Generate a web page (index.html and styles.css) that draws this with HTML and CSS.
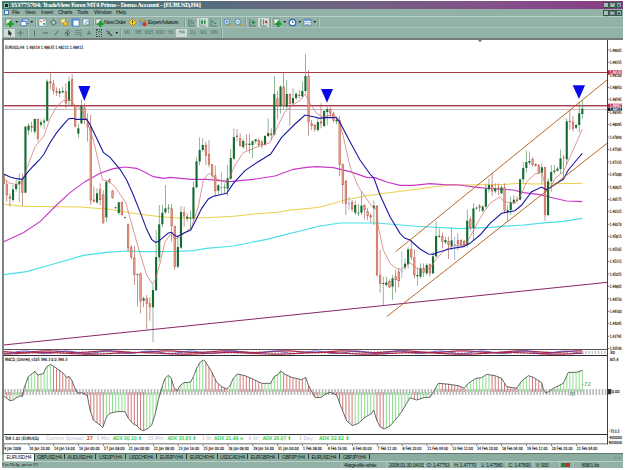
FILE: index.html
```
<!DOCTYPE html>
<html lang="en">
<head>
    <meta charset="UTF-8">
    <meta name="viewport" content="width=device-width, initial-scale=1.0">
    <title>TradeView Forex MT4 Prime</title>
    <link rel="stylesheet" href="styles.css">
</head>
<body>
    <svg class="defs">
        <symbol id="plus" viewBox="0 0 10 10"><path d="M1 1h6v6H1z" fill="#e8f0e8" stroke="#587868" stroke-width=".7"/><path d="M6 3v7M2.500 6.500h7" stroke="#10a020" stroke-width="2.600"/></symbol>
        <symbol id="profiles" viewBox="0 0 10 10"><path d="M3 1h6v5H3z" fill="#cfe4ff" stroke="#3868a0" stroke-width=".8"/><path d="M1 3.5h6v5H1z" fill="#fff" stroke="#3868a0" stroke-width=".8"/><path d="M1 4h6" stroke="#4888d8"/></symbol>
        <symbol id="watch" viewBox="0 0 10 10"><path d="M1 1h8v8H1z" fill="#fff" stroke="#4878a8" stroke-width=".7"/><path d="M2.5 3h2v2h-2z" fill="#d89010"/><path d="M5.5 5.5h2v2h-2z" fill="#20903c"/><path d="M5.5 3.5l2-1" stroke="#c33"/></symbol>
        <symbol id="navi" viewBox="0 0 10 10"><circle cx="5" cy="5" r="2.6" fill="none" stroke="#587068" stroke-width=".8"/><path d="M5 0v10M0 5h10" stroke="#587068" stroke-width=".6"/><circle cx="5" cy="5" r="1.2" fill="#dce8e0"/></symbol>
        <symbol id="folder" viewBox="0 0 10 10"><path d="M1 1h5v5H1z" fill="#f6e9a0" stroke="#a98b28" stroke-width=".7"/><path d="M6 3l1 2 2.3.2-1.7 1.6.5 2.2L6 8 4 9l.4-2.2L3 5.2 5 5z" fill="#f8cc28" stroke="#a07818" stroke-width=".5"/></symbol>
        <symbol id="terminal" viewBox="0 0 10 10"><path d="M1 1h8v8H1z" fill="#fff" stroke="#3068b0" stroke-width=".8"/><path d="M1 2h8M2 2v7" stroke="#3c80d0" stroke-width="1.5"/></symbol>
        <symbol id="tester" viewBox="0 0 10 10"><path d="M1 1h7v7H1z" fill="#eef4fc" stroke="#5880a0" stroke-width=".8"/><circle cx="6" cy="5.5" r="2" fill="#d8eef8" stroke="#607080" stroke-width=".7"/><path d="M7.3 7L9 9" stroke="#b88820"/></symbol>
        <symbol id="diamond" viewBox="0 0 10 10"><path d="M5 .5L9.5 5 5 9.5.5 5z" fill="#f8d030" stroke="#987010" stroke-width=".7"/><path d="M5 2.6v3M5 6.4v1.2" stroke="#4c3800"/></symbol>
        <symbol id="expert" viewBox="0 0 10 10"><path d="M1 4l4-3 4 3z" fill="#f0b838" stroke="#906010" stroke-width=".6"/><circle cx="4" cy="6" r="2.4" fill="#70a0d8"/><circle cx="7.3" cy="7" r="2.2" fill="#d83020"/></symbol>
        <symbol id="bars" viewBox="0 0 10 10"><path d="M2 1v8h7M4.5 2v5M7 3v4M4.5 3h1M6 6h1" fill="none" stroke="#38705c" stroke-width=".8"/></symbol>
        <symbol id="candle" viewBox="0 0 10 10"><path d="M2 1v8h7M4.500 1.500v6M7.500 2v5" fill="none" stroke="#307050" stroke-width=".7"/><path d="M3.700 3h1.800v3.500H3.700zM6.700 3h1.600v3H6.700z" fill="#108838"/></symbol>
        <symbol id="line" viewBox="0 0 10 10"><path d="M2 1v8h7" fill="none" stroke="#38705c" stroke-width=".8"/><path d="M3 4c2-1 2 3 5 2" fill="none" stroke="#108838"/></symbol>
        <symbol id="zoomin" viewBox="0 0 10 10"><path d="M6 6l3 3" stroke="#c89820" stroke-width="1.6"/><circle cx="4.200" cy="4.200" r="3" fill="#e0f2ff" stroke="#3870a0" stroke-width=".8"/><path d="M4.200 2.700v3M2.700 4.200h3" stroke="#285890" stroke-width=".8"/></symbol>
        <symbol id="zoomout" viewBox="0 0 10 10"><path d="M6 6l3 3" stroke="#c89820" stroke-width="1.6"/><circle cx="4.200" cy="4.200" r="3" fill="#e0f2ff" stroke="#3870a0" stroke-width=".8"/><path d="M2.700 4.200h3" stroke="#285890" stroke-width=".8"/></symbol>
        <symbol id="scroll" viewBox="0 0 10 10"><path d="M2 1v8h7M5 6v-3" fill="none" stroke="#38705c" stroke-width=".8"/><path d="M5 2.500l3.500 2.500L5 7.500z" fill="#189038"/></symbol>
        <symbol id="shift" viewBox="0 0 10 10"><path d="M2 1v8h7M5 1.500v6" fill="none" stroke="#405850" stroke-width=".8"/><path d="M9 2.500v4L6 4.500z" fill="#a03828"/></symbol>
        <symbol id="clock" viewBox="0 0 10 10"><circle cx="5" cy="5" r="4.300" fill="#2868c0"/><circle cx="5" cy="5" r="2.900" fill="#fff"/><path d="M5 3v2h1.800" fill="none" stroke="#204880" stroke-width=".8"/></symbol>
        <symbol id="template" viewBox="0 0 10 10"><path d="M1 1.500h8v7H1z" fill="#f4f8ff" stroke="#386cb0" stroke-width=".7"/><path d="M1 2.300h8" stroke="#3c80d0" stroke-width="1.400"/><path d="M2 5.500l2-1 2 1 2-1M2 7.200h5" fill="none" stroke="#507898" stroke-width=".7"/></symbol>
        <symbol id="cursor" viewBox="0 0 10 10"><path d="M3.500 1v7l1.700-1.500 1 2.500 1-.5-1-2.300h2z" fill="#182820"/></symbol>
        <symbol id="cross" viewBox="0 0 10 10"><path d="M5 1v8M1 5h8" stroke="#486458" stroke-width=".8"/></symbol>
        <symbol id="vline" viewBox="0 0 10 10"><path d="M5 2v6.500" stroke="#486458"/></symbol>
        <symbol id="hline" viewBox="0 0 10 10"><path d="M2 5h6" stroke="#384c44"/></symbol>
        <symbol id="tline" viewBox="0 0 10 10"><path d="M2.500 8l5-6" stroke="#384c44" stroke-width=".9"/></symbol>
        <symbol id="channel" viewBox="0 0 10 10"><path d="M1 7l6-6M3 9l6-6M2 4l6 4M5 1v8" stroke="#384c44" stroke-width=".7"/></symbol>
        <symbol id="fibo" viewBox="0 0 10 10"><path d="M1 2h8M1 4.500h8M1 7h6" stroke="#384c44" stroke-width=".7" stroke-dasharray="1.500 .6"/><path d="M8 6v3.500" stroke="#384c44" stroke-width=".7"/></symbol>
        <symbol id="arrows" viewBox="0 0 10 10"><path d="M1 2l4 3M5 3l-2 3h3" fill="none" stroke="#283c34"/><path d="M6 5l3 3-3 1z" fill="#445c50"/></symbol>
    </svg>

    <div class="window">
        <div class="titlebar">
            <span class="app-icon"></span>
            <span class="title">353775704: TradeView Forex MT4 Prime - Demo Account - [EURUSD,H4]</span>
            <span class="win-buttons"><i>_</i><i>□</i><i>×</i></span>
        </div>
        <div class="menubar">
            <span class="doc-icon"></span>
            <span>File</span><span>View</span><span>Insert</span><span>Charts</span><span>Tools</span><span>Window</span><span>Help</span>
            <span class="win-buttons"><i>_</i><i>❐</i><i>×</i></span>
        </div>
        <div class="toolbar">
            <svg class="icon"><use href="#plus"/></svg><b class="drop"></b>
            <svg class="icon"><use href="#profiles"/></svg><b class="drop"></b>
            <b class="sep"></b>
            <svg class="icon"><use href="#watch"/></svg>
            <svg class="icon"><use href="#navi"/></svg>
            <svg class="icon"><use href="#folder"/></svg>
            <svg class="icon"><use href="#terminal"/></svg>
            <svg class="icon"><use href="#tester"/></svg>
            <b class="sep"></b>
            <svg class="icon tight"><use href="#plus"/></svg><span class="label order">New Order</span>
            <svg class="icon tight"><use href="#diamond"/></svg>
            <svg class="icon"><use href="#expert"/></svg><span class="label advisors">Expert Advisors</span>
            <b class="sep"></b>
            <svg class="icon"><use href="#bars"/></svg>
            <svg class="icon pressed"><use href="#candle"/></svg>
            <svg class="icon"><use href="#line"/></svg>
            <b class="sep"></b>
            <svg class="icon"><use href="#zoomin"/></svg>
            <svg class="icon"><use href="#zoomout"/></svg>
            <b class="sep"></b>
            <svg class="icon"><use href="#scroll"/></svg>
            <svg class="icon pressed"><use href="#shift"/></svg>
            <b class="sep"></b>
            <svg class="icon"><use href="#plus"/></svg><b class="drop"></b>
            <svg class="icon"><use href="#clock"/></svg><b class="drop"></b>
            <svg class="icon"><use href="#template"/></svg><b class="drop"></b>
            <b class="sep"></b>
        </div>
        <div class="toolbar periods">
            <svg class="icon pressed"><use href="#cursor"/></svg>
            <svg class="icon"><use href="#cross"/></svg>
            <b class="sep"></b>
            <svg class="icon"><use href="#vline"/></svg>
            <svg class="icon"><use href="#hline"/></svg>
            <svg class="icon"><use href="#tline"/></svg>
            <svg class="icon"><use href="#channel"/></svg>
            <svg class="icon"><use href="#fibo"/></svg>
            <span class="tool">A</span>
            <span class="tool"><u class="boxed">T</u></span>
            <svg class="icon"><use href="#arrows"/></svg><b class="drop"></b>
            <b class="sep"></b>
            <span class="period">M1</span><span class="period">M5</span><span class="period">M15</span><span class="period">M30</span><span class="period">H1</span><span class="period pressed">H4</span><span class="period">D1</span><span class="period">W1</span><span class="period">MN</span>
            <b class="sep"></b>
        </div>

        <div class="chart-frame">
            <!-- 3 units = 1px -->
            <svg class="chart" viewBox="12 -30 1857 1239">
                <g id="price"></g>
                <g id="macd" transform="translate(0 885)"></g>
                <g id="frame"></g>
                <g id="labels"></g>
            </svg>
        </div>

        <div class="tabs">
            <span class="tab active">EURUSD,H4</span><span class="tab">GBPUSD,H4</span><span class="tab">AUDUSD,H4</span><span class="tab">USDJPY,H4</span><span class="tab">USDCHF,H4</span><span class="tab">EURJPY,H4</span><span class="tab">EURCHF,H4</span><span class="tab">USDCAD,H4</span><span class="tab">EURGBP,H4</span><span class="tab">GBPJPY,H4</span><span class="tab">EURUSD,H4</span><span class="tab">GBPJPY,H4</span>
            <span class="tab-arrows">‹ ›</span>
        </div>
        <div class="statusbar">
            <span class="help">For Help, press F1</span>
            <span class="profile">4largeofile-white</span>
            <span class="date">2008.01.30 04:00</span>
            <span>O: 1.47753</span><span>H: 1.47770</span><span>L: 1.47580</span><span>C: 1.47690</span>
            <span class="volume">V: 930</span>
            <span class="signal"><i></i></span>
            <span class="traffic">898/1 kb</span>
        </div>
    </div>

    <script>
        const NS = "http://www.w3.org/2000/svg";
        const price = document.querySelector("#price");
        const macd = document.querySelector("#macd");
        const frame = document.querySelector("#frame");
        const labels = document.querySelector("#labels");
        const X0 = 11, STEP = 9.333;

        const add = (parent, tag, attrs, text) => {
            const el = document.createElementNS(NS, tag);
            for (let k in attrs) el.setAttribute(k, attrs[k]);
            if (text) el.textContent = text;
            parent.appendChild(el);
            return el;
        };
        const rect = (p, x, y, w, h, fill) => add(p, "rect", { x, y, width: w, height: h, fill });
        const poly = (p, points, cls) => add(p, "polyline", { points, class: cls });
        const label = (x, y, text, width, cls) =>
            add(labels, "text", { x, y, class: cls || "small", textLength: width, lengthAdjust: "spacingAndGlyphs" }, text);

        // direction, high, body top, body bottom, low
        const candles = `r 360 372 402 410;r 390 403 436 455;r 430 440 445 470;g 405 418 450 455;g 390 402 417 425;g 370 394 402 455;r 370 390 428 468;g 228 230 428 430;
g 220 227 241 255;r 215 228 233 246;g 205 207 245 252;r 205 207 266 275;g 208 217 224 232;g 204 212 217 237;g 88 94 212 215;r 65 94 100 118;
r 90 100 123 133;r 112 123 128 138;g 115 124 130 142;g 110 123 127 130;r 100 124 160 175;g 80 94 152 165;r 72 88 166 170;r 165 167 229 232;
g 222 235 251 264;g 148 168 220 222;r 160 172 208 222;r 190 220 232 275;r 195 230 451 465;r 410 449 454 458;g 415 430 457 462;r 400 418 450 465;
r 420 434 518 522;g 393 395 502 515;r 385 388 397 400;r 420 422 444 446;g 470 472 474 476;g 455 457 489 495;r 455 456 495 497;g 500 502 503 504;
r 520 523 595 605;r 585 592 622 628;r 588 622 674 705;g 670 673 675 770;r 668 670 754 790;g 740 745 752 772;r 735 745 761 838;r 742 760 771 812;
g 700 720 772 876;g 540 621 721 723;g 465 523 622 635;g 465 488 523 532;g 405 475 487 492;g 462 473 475 490;r 462 475 528 575;r 527 528 650 660;
g 555 591 650 655;g 468 486 593 598;r 470 487 499 530;g 490 500 506 515;g 482 503 506 540;g 395 412 506 512;g 322 334 412 415;g 262 300 334 345;
g 265 285 300 305;r 275 285 317 345;r 270 312 344 352;r 342 343 377 385;r 347 376 423 440;g 402 406 422 432;b 365 412 414 430;g 400 411 413 430;
g 345 385 416 438;g 297 324 386 390;g 235 261 326 330;r 237 257 261 275;r 250 265 288 290;g 267 273 291 297;r 252 281 284 300;g 252 281 285 310;
g 270 274 285 325;g 267 268 274 280;r 265 270 285 290;r 270 275 285 295;g 255 258 284 287;g 205 249 258 262;r 235 250 256 270;g 78 132 254 256;
r 122 145 167 208;g 105 110 168 190;r 66 110 168 180;g 90 132 170 178;r 130 132 161 228;g 115 144 160 165;g 128 131 144 150;r 120 135 138 145;
g 95 123 139 145;g 12 78 123 130;r 60 78 217 257;r 210 220 228 240;r 222 225 238 245;g 205 216 240 245;r 160 215 220 235;g 180 183 228 232;
g 170 178 186 225;r 172 177 190 200;r 185 190 212 218;g 200 210 214 222;r 198 210 344 378;r 340 343 405 462;r 390 393 461 495;b 440 460 462 480;
r 450 456 478 485;g 452 465 488 495;g 462 488 490 498;g 423 467 488 495;r 462 465 480 508;r 475 484 497 510;r 490 496 502 518;g 452 467 475 525;
r 465 468 675 680;r 600 675 702 728;g 680 699 702 765;g 680 697 705 710;r 688 693 712 715;g 675 685 710 750;r 660 679 690 728;r 655 665 693 712;
b 605 662 664 685;g 625 641 653 660;g 592 598 643 655;r 570 597 622 630;r 598 622 676 685;g 655 675 679 708;g 640 656 680 685;r 640 656 668 680;
g 640 645 670 675;r 640 643 670 680;g 605 619 670 672;g 515 558 619 622;g 535 557 560 565;r 548 558 575 595;g 560 570 577 582;r 560 573 585 627;
g 535 571 588 600;b 560 582 584 630;r 550 571 582 600;r 568 570 585 588;r 570 573 585 588;g 480 512 585 592;r 500 508 534 540;g 460 475 534 570;
g 470 473 475 480;r 462 467 473 485;g 465 470 482 487;g 400 416 470 475;g 385 405 418 428;r 370 405 424 438;g 400 415 424 430;r 400 413 418 435;
g 405 412 430 433;r 400 412 482 490;g 465 480 485 515;g 440 457 480 495;g 435 449 458 463;r 438 449 453 458;g 385 388 449 451;g 335 354 388 398;
g 302 336 354 368;g 305 333 338 345;r 322 327 345 350;r 340 342 347 350;r 342 346 368 372;g 340 352 368 400;r 350 352 494 512;g 385 394 495 498;
g 345 366 394 425;g 345 362 366 372;g 350 356 362 365;g 298 325 357 372;r 315 322 324 385;g 205 214 328 345;r 180 213 216 240;r 198 215 236 245;
g 220 225 233 238;g 155 190 225 248;g 148 176 192 205`.split(";").map(c => c.trim().split(" "));

        // levels
        rect(price, 12, 66, 1809, 3, "#a83848");
        rect(price, 12, 165, 1809, 3, "#a04050");
        rect(price, 12, 168, 1809, 3, "#dcaab4");
        rect(price, 12, 177, 1809, 3, "#c4bec2");

        // moving averages
        poly(price, "11,674 80,665 150,645 250,616 320,607 380,603 430,605 530,604 580,602 620,595 700,588 800,568 900,543 960,528 1020,519 1130,519 1240,528 1380,536 1470,532 1570,525 1640,518 1690,514 1747,505", "ma cyan");
        poly(price, "11,462 70,469 240,471 330,478 400,490 480,500 530,504 620,503 700,499 760,492 830,487 870,480 930,475 960,471 1040,449 1100,437 1200,424 1300,411 1350,405 1500,404 1560,400 1600,402 1747,400", "ma yellow");
        poly(price, "11,575 70,548 120,515 170,465 210,428 255,395 300,370 340,356 375,351 410,355 435,367 460,380 490,385 510,382 575,388 620,388 690,395 760,388 825,378 880,358 920,352 950,350 1000,353 1050,365 1100,382 1125,383 1160,396 1200,406 1240,406 1290,401 1330,404 1380,405 1430,412 1490,417 1540,420 1570,428 1620,434 1660,444 1700,453 1747,455", "ma magenta");

        candles.forEach(([dir, high, top, bottom, low], i) => {
            const x = X0 + STEP * i;
            const wick = { g: "#5c9464", r: "#a8645c", b: "#8098d8" }[dir];
            const body = { g: "#146c30", r: "#b85c48", b: "#8098d8" }[dir];
            rect(price, x - 1, high, 2, low - high, wick);
            rect(price, x - 3.2, top, 6.4, Math.max(bottom - top, 2.5), body);
            if (dir === "r" && bottom - top > 6) rect(price, x - 1.8, +top + 2, 3.6, bottom - top - 4, "#e89c88");
        });

        poly(price, "11,385 25,398 45,403 65,402 75,370 105,290 132,258 150,205 170,170 190,152 210,150 225,165 245,180 260,210 280,270 308,390 325,393 345,410 378,460 400,540 420,610 440,675 456,700 465,692 480,640 495,575 512,552 525,568 545,558 575,530 595,470 610,390 625,372 632,370 645,385 680,398 690,380 705,345 730,308 765,293 810,278 835,225 855,185 885,160 900,152 916,132 930,160 950,190 965,200 1000,195 1015,205 1030,260 1050,350 1075,410 1095,440 1115,468 1128,475 1135,530 1150,600 1170,640 1190,656 1205,658 1230,638 1250,655 1290,655 1310,625 1330,605 1350,590 1380,585 1395,588 1410,560 1440,505 1470,460 1500,440 1512,455 1545,460 1560,440 1580,395 1605,372 1625,368 1640,420 1650,415 1665,385 1690,365 1715,310 1735,265 1747,238", "ma red");
        poly(price, "11,372 30,381 50,386 67,388 82,368 100,348 118,330 132,312 150,278 170,248 190,224 206,206 218,205 228,208 260,208 268,220 290,265 310,307 330,322 360,358 380,390 400,435 420,485 440,538 455,568 466,577 476,574 492,560 505,549 515,547 522,555 532,560 550,550 572,540 585,515 605,475 625,447 640,439 680,430 700,400 735,362 770,338 812,312 845,262 885,222 915,195 940,200 960,205 980,202 1008,203 1020,218 1050,275 1080,330 1110,372 1122,385 1140,435 1170,500 1200,550 1215,565 1230,570 1260,597 1285,612 1300,613 1310,608 1350,596 1390,590 1410,580 1440,555 1470,520 1505,490 1545,482 1565,465 1595,425 1625,411 1640,420 1670,400 1690,388 1705,360 1730,330 1747,310", "ma blue");

        // trend lines
        poly(price, "11,885 1821,697", "ma purple");
        poly(price, "1187,605 1821,90", "ma brown");
        poly(price, "1160,800 1821,280", "ma brown");

        // sell markers
        ["235,108 271,108 253,153", "963,117 999,117 981,158", "1718,106 1755,106 1737,147"]
            .forEach(points => add(price, "polygon", { points, fill: "#0808e8" }));
        add(price, "polygon", { points: "1434,-30 1446,-30 1440,-23", fill: "#707070" });

        // narrow oscillator window
        let up = "", down = "", mid = "";
        for (let i = 0; i < 187; i++) {
            const x = X0 + STEP * i;
            up += `${x},${20 + 2.5 * Math.sin(i * 0.33)} `;
            down += `${x},${25 + 2.5 * Math.sin(i * 0.21 + 2)} `;
            mid += `${x},${22 + 4 * Math.cos(i * 0.47)} `;
        }
        for (let x = X0; x < 1820; x += STEP) rect(macd, x, 18, 4, 9, "#c0b8c0");
        poly(macd, up, "osc-red");
        poly(macd, mid, "osc-blue");
        poly(macd, down, "osc-red");

        // MACD
        const curve = "11,152 20,160 30,167 40,165 50,158 62,152 67,155 72,130 85,95 105,79 113,90 130,86 140,65 152,58 170,70 190,85 200,97 208,95 215,105 225,130 235,145 245,143 262,152 270,195 280,225 300,240 308,248 320,215 330,205 350,200 375,200 385,220 400,237 412,243 420,253 430,257 445,250 455,240 465,210 475,165 485,130 495,100 505,91 513,98 523,130 532,137 540,122 552,113 572,111 580,95 590,70 600,52 610,45 615,48 635,80 650,112 665,125 680,132 690,122 700,100 712,87 735,92 760,103 785,115 812,115 822,95 835,88 842,78 855,88 875,97 905,104 917,97 925,120 935,140 945,157 962,158 975,148 990,142 1010,150 1025,190 1040,228 1058,242 1075,235 1095,217 1115,205 1121,195 1130,225 1140,245 1152,252 1170,243 1190,220 1205,200 1220,175 1230,158 1250,165 1275,157 1290,157 1298,145 1315,115 1340,117 1375,122 1392,130 1405,115 1428,100 1445,98 1460,88 1485,92 1505,100 1520,125 1550,130 1565,108 1585,92 1600,97 1625,113 1630,132 1638,145 1660,130 1690,115 1705,82 1730,82 1747,76";
        const pts = curve.split(" ").map(p => p.split(",").map(Number));
        const valueAt = (x) => {
            for (let i = 1; i < pts.length; i++) {
                if (x <= pts[i][0]) {
                    const [x1, y1] = pts[i - 1], [x2, y2] = pts[i];
                    return y1 + (y2 - y1) * (x - x1) / (x2 - x1);
                }
            }
            return pts[pts.length - 1][1];
        };
        for (let x = X0 + 2.5; x < 1820; x += STEP) rect(macd, x, 132, 4.5, 18, "#b4b4b4");
        for (let i = 1; i < 187; i++) {
            const x = X0 + STEP * i;
            const y = valueAt(x);
            const color = y <= valueAt(x - STEP) ? "#8ee08e" : "#d07878";
            rect(macd, x - 1.5, Math.min(y, 141), 3, Math.abs(y - 141), color);
        }
        poly(macd, curve, "signal-line");

        // window borders
        rect(frame, 12, 897, 1812, 3, "#5c5458");
        rect(frame, 12, 915, 1812, 3, "#303034");
        rect(frame, 12, 1152, 1812, 3, "#303034");
        rect(frame, 12, 1180, 1812, 3, "#707070");
        rect(frame, 1821, -30, 3, 1213, "#404040");

        // price scale
        ["1.49605", "1.49355", "1.49100", "1.48850", "1.48595", "1.48345", "1.48095", "1.47840", "1.47585", "1.47335", "1.47080", "1.46825", "1.46575", "1.46325", "1.46070", "1.45815", "1.45565", "1.45315", "1.45055", "1.44805", "1.44550", "1.44300", "1.44045", "1.43795", "1.43540"]
            .forEach((text, i) => {
                const y = 37.33 * i;
                rect(frame, 1824, y - 1, 4, 2, "#404040");
                label(1829, y + 5, text, 36);
            });
        rect(labels, 1824, 61, 42, 12, "#c02038");
        label(1829, 71, "1.49140", 36, "small inverse");
        rect(labels, 1824, 161, 42, 11, "#c02038");
        label(1829, 171, "1.48467", 36, "small inverse");
        rect(labels, 1824, 173, 42, 10, "#101010");
        label(1829, 182, "1.48411", 36, "small inverse");

        // time scale
        ["9 Jan 2008", "10 Jan 20:00", "14 Jan 16:00", "16 Jan 00:00", "17 Jan 08:00", "21 Jan 00:00", "22 Jan 08:00", "23 Jan 16:00", "25 Jan 00:00", "28 Jan 08:00", "29 Jan 16:00", "31 Jan 00:00", "1 Feb 08:00", "4 Feb 16:00", "6 Feb 00:00", "7 Feb 12:00", "8 Feb 20:00", "12 Feb 04:00", "13 Feb 12:00", "14 Feb 20:00", "18 Feb 04:00", "19 Feb 12:00", "20 Feb 20:00", "22 Feb 04:00"]
            .forEach((text, i) => {
                const x = 11 + 74.65 * i;
                rect(frame, x, 1183, 2, 5, "#404040");
                label(x + 2, 1200, text, i ? (text.length > 11 ? 62 : 57) : 50);
            });

        label(15, -2, "EURUSD,H4  1.48314 1.48635 1.48211 1.48411", 235);
        label(15, 933, "MACD_Colored_v105 396.3 0.0 396.3", 187);
        label(1829, 913, "30", 16);
        label(1829, 932, "605.8", 26);
        rect(labels, 1824, 1017, 10, 16, "#303030");
        label(1835, 1029, "0.00", 24);
        label(1827, 1149, "-753.5", 32);
        label(1826, 1168, "-9000000", 40);
        label(1826, 1181, "90000000", 40);
        label(1745, 1008, "-72", 27, "tag");
        label(1706, 1038, "70", 18, "tag");

        // trend panel
        label(15, 1171, "ToR 1.02 (EURUSD)", 102);
        [[138, "Current Spread:", 115], [290, "5 Min:", 42], [443, "15 Min:", 52], [606, "1 Hr:", 32], [745, "4 Hr:", 35], [897, "1 Day:", 45]]
            .forEach(([x, text, w]) => label(x, 1171, text, w, "trend dim"));
        [[339, "ADX 30.10 ⬆", 86], [503, "ADX 33.65 ⬆", 86], [643, "ADX 21.49 =", 88], [788, "ADX 28.07 ⬆", 86], [958, "ADX 32.92 ⬆", 90]]
            .forEach(([x, text, w]) => label(x, 1171, text, w, "trend"));
        label(260, 1171, "27", 18, "trend spread");
    </script>
</body>
</html>
```
FILE: styles.css
```
* {
    margin: 0;
    padding: 0;
    box-sizing: border-box;
}

body {
    background: #fff;
    font-family: "Liberation Sans", Arial, sans-serif;
    font-size: 5.5px;
    color: #101c18;
    overflow: hidden;
}

.defs {
    display: none;
}

.window {
    display: flex;
    flex-direction: column;
    width: 621px;
    height: 467px;
    margin: 1px 0 0 2px;
    background: #92b2a8;
}

/* title and menu */
.titlebar {
    display: flex;
    align-items: center;
    flex: 0 0 8px;
    padding-left: 2px;
    background: linear-gradient(90deg, #40786c 0%, #50707a 28%, #6c6480 52%, #84508a 80%, #883c84 100%);
}

.app-icon {
    width: 5px;
    height: 5px;
    margin-right: 1px;
    background: #182c24;
    border: 1px solid #90b0a4;
}

.title {
    font-family: "DejaVu Serif", serif;
    font-weight: bold;
    font-size: 5.7px;
    letter-spacing: -0.66px;
    line-height: 8px;
    white-space: pre;
    color: #f4f8f8;
}

.win-buttons {
    display: flex;
    margin-left: auto;
    margin-right: 1px;
}

.win-buttons i {
    width: 6.5px;
    height: 6px;
    background: #a4c0b6;
    border: 0.5px solid #405850;
    font: bold 5px/5px "DejaVu Sans", sans-serif;
    text-align: center;
}

.menubar {
    display: grid;
    grid-template-columns: 8px 13px 16px 17px 19px 17px 22px 20px 1fr;
    align-items: center;
    flex: 0 0 8px;
    padding-left: 2px;
    border-bottom: 1px solid #b8d0c8;
    line-height: 7px;
    letter-spacing: -0.35px;
}

.doc-icon {
    width: 5px;
    height: 5px;
    background: #e8f0ff;
    border: 1px solid #4c78b0;
}

/* toolbars */
.toolbar {
    display: flex;
    align-items: center;
    flex: 0 0 11px;
    padding-left: 2px;
    border-bottom: 1px solid #a8c4ba;
}

.icon {
    flex: 0 0 11px;
    width: 11px;
    height: 9px;
}

.icon.tight {
    flex-basis: 9px;
}

.pressed {
    background: #d0dcd6;
}

.drop {
    flex: 0 0 4px;
    height: 2px;
    background: #182820;
    clip-path: polygon(10% 0, 80% 0, 45% 100%);
}

.sep {
    flex: 0 0 1px;
    height: 9px;
    margin: 0 1px;
    background: #7c9c90;
    box-shadow: 1px 0 #b4ccc4;
}

.label {
    font-size: 5.5px;
    letter-spacing: -0.55px;
    white-space: nowrap;
}

.order {
    flex: 0 0 24px;
}

.advisors {
    flex: 0 0 35px;
}

.periods {
    flex-basis: 10px;
    border-bottom: 0;
}

.periods .icon {
    height: 8px;
}

.tool,
.period {
    flex: 0 0 10.9px;
    line-height: 8px;
    text-align: center;
    font-size: 5px;
    color: #384c44;
}

.tool {
    flex-basis: 10px;
}

.period {
    font-size: 4.5px;
    color: #506c60;
}

.boxed {
    border: 0.5px dotted #384c44;
    text-decoration: none;
}

/* chart */
.chart-frame {
    flex: 0 0 414px;
    border-left: 2px solid #788480;
    border-top: 2px solid #747c78;
    background: #fff;
}

.chart {
    display: block;
    width: 619px;
    height: 413px;
}

.ma {
    fill: none;
    stroke-width: 3;
}

.cyan { stroke: #48e0e8; stroke-width: 3.4; }
.yellow { stroke: #ecd048; }
.magenta { stroke: #c838c8; stroke-width: 3.4; }
.red { stroke: #cc7470; stroke-width: 2.2; }
.blue { stroke: #1818a0; stroke-width: 3.3; }
.purple { stroke: #882868; }
.brown { stroke: #b8682c; }

.osc-red {
    fill: none;
    stroke: #b02848;
    stroke-width: 3.5;
}

.osc-blue {
    fill: none;
    stroke: #5848c0;
    stroke-width: 2.5;
}

.signal-line {
    fill: none;
    stroke: #505050;
    stroke-width: 2.6;
}

.small {
    font: 13px "DejaVu Sans", sans-serif;
    fill: #101010;
    stroke: #101010;
    stroke-width: 0.4;
    white-space: pre;
}

.inverse {
    fill: #fff;
    stroke: #fff;
}

.tag {
    font: 17px "DejaVu Sans", sans-serif;
    fill: #388838;
}

.trend {
    font: 15px "DejaVu Sans", sans-serif;
    fill: #28c848;
    stroke: #28c848;
    stroke-width: 0.5;
}

.dim {
    fill: #b4b4c8;
    stroke: none;
}

.spread {
    fill: #c82828;
    stroke: #c82828;
}

/* bottom bars */
.tabs {
    display: flex;
    flex: 0 0 8px;
    padding-left: 2px;
    background: #8caca0;
    border-bottom: 1px solid #b8d0c8;
    border-top: 1px solid #607870;
}

.tab {
    flex: 0 0 30.5px;
    height: 5px;
    border-right: 1px solid #284038;
    font-size: 5px;
    line-height: 6px;
    letter-spacing: -0.5px;
    text-align: center;
    white-space: nowrap;
}

.tab.active {
    height: 7px;
    background: #fff;
}

.tab-arrows {
    margin-left: auto;
    margin-right: 3px;
    line-height: 6px;
    color: #587468;
}

.statusbar {
    display: flex;
    align-items: center;
    flex: 1;
    font-size: 5px;
    white-space: nowrap;
}

.statusbar span {
    flex: 0 0 27.2px;
    padding-left: 2px;
    border-left: 1px solid #a8c4ba;
    letter-spacing: -0.25px;
    line-height: 6px;
}

.statusbar .help {
    flex-basis: 339px;
    padding-left: 0;
    border: 0;
    font-family: "Liberation Serif", serif;
    letter-spacing: -0.05px;
}

.statusbar .profile {
    flex-basis: 45px;
}

.statusbar .date {
    flex-basis: 38px;
}

.statusbar .volume {
    flex-basis: 26px;
}

.statusbar .signal {
    flex-basis: 14px;
    padding: 0;
}

.signal i {
    display: block;
    width: 9px;
    height: 4px;
    margin: 1px;
    background: linear-gradient(90deg, #38803c 50%, #b03828 50%);
}

.statusbar .traffic {
    flex-basis: 46px;
    padding-left: 8px;
}
```
